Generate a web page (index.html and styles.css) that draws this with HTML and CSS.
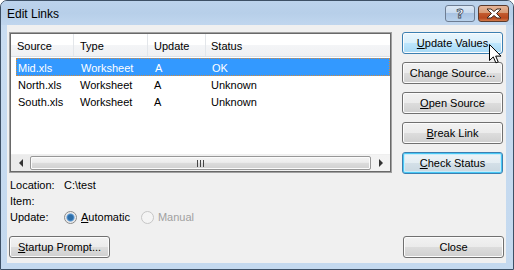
FILE: index.html
```html
<!DOCTYPE html>
<html>
<head>
<meta charset="utf-8">
<link rel="stylesheet" href="styles.css">
</head>
<body>
<div class="window">
  <div class="titlebar">
    <span class="title">Edit Links</span>
    <div class="caption-btns">
      <div class="cap help"><span class="q">?</span></div>
      <div class="cap close">
        <svg width="18" height="11" viewBox="0 0 18 11"><path d="M2 1h4l3 2.5L12 1h4l-4.5 4.5L16 10h-4L9 7.5 6 10H2l4.5-4.5z" fill="#fff" stroke="#3b2a22" stroke-width="1" stroke-linejoin="round"/></svg>
      </div>
    </div>
  </div>
  <div class="client">
    <div class="top">
      <div class="list">
        <div class="header">
          <div class="hcell h1">Source</div>
          <div class="hcell h2">Type</div>
          <div class="hcell h3">Update</div>
          <div class="hcell h4">Status</div>
        </div>
        <div class="rows">
          <div class="row selected"><span class="c1">Mid.xls</span><span class="c2">Worksheet</span><span class="c3">A</span><span class="c4">OK</span></div>
          <div class="row"><span class="c1">North.xls</span><span class="c2">Worksheet</span><span class="c3">A</span><span class="c4">Unknown</span></div>
          <div class="row"><span class="c1">South.xls</span><span class="c2">Worksheet</span><span class="c3">A</span><span class="c4">Unknown</span></div>
        </div>
        <div class="hscroll">
          <div class="arrow"><span class="tri left"></span></div>
          <div class="thumb"><span class="grip"></span></div>
          <div class="arrow"><span class="tri right"></span></div>
        </div>
      </div>
      <div class="btns">
        <div class="btn hover"><span><u>U</u>pdate Values</span></div>
        <div class="btn"><span>Chan<u>g</u>e Source...</span></div>
        <div class="btn"><span><u>O</u>pen Source</span></div>
        <div class="btn"><span><u>B</u>reak Link</span></div>
        <div class="btn default"><span><u>C</u>heck Status</span></div>
      </div>
    </div>
    <div class="info">
      <div class="line"><span class="lbl">Location:</span><span>C:\test</span></div>
      <div class="line"><span class="lbl">Item:</span></div>
      <div class="line"><span class="lbl">Update:</span>
        <span class="radio on"></span><span class="rtext"><u>A</u>utomatic</span>
        <span class="radio off"></span><span class="rtext disabled">Manual</span>
      </div>
    </div>
    <div class="bottom">
      <div class="btn"><span><u>S</u>tartup Prompt...</span></div>
      <div class="btn"><span>Close</span></div>
    </div>
  </div>
  <svg class="cursor" width="13" height="20" viewBox="0 0 13 20"><path d="M0.5 0.5v16l3.8-3.6 2.6 6 2.3-1-2.5-5.8h5.3z" fill="#fff" stroke="#000" stroke-width="1" stroke-linejoin="miter"/></svg>
</div>
</body>
</html>
```
FILE: styles.css
```css
* { box-sizing: border-box; }
html, body { margin: 0; padding: 0; background: #fff; }
body { font-family: "Liberation Sans", Arial, sans-serif; font-size: 11px; color: #000; }

.window {
  position: relative;
  width: 514px;
  height: 270px;
  border: 1px solid #3d5066;
  border-radius: 7px 7px 0 0;
  background: linear-gradient(#c2d7ee, #c8dcf1 30px, #c4d9ef);
  display: flex;
  flex-direction: column;
  overflow: hidden;
}

.titlebar {
  height: 24px;
  display: flex;
  align-items: center;
  justify-content: space-between;
  padding: 0 4px 0 6px;
  background: linear-gradient(#bcd3ec, #b7cfe9 50%, #c0d6ee);
}
.title { font-size: 12px; color: #000; padding-top: 1px; }

.caption-btns { display: flex; gap: 3px; align-self: flex-start; margin-top: 4px; }
.cap {
  height: 17px;
  border: 1px solid #6d7d93;
  border-radius: 3px;
  display: flex;
  align-items: center;
  justify-content: center;
}
.help {
  width: 30px;
  background: linear-gradient(#dce8f5, #c8daee 45%, #a9c3e2 50%, #b9d2ec);
}
.help .q {
  font-family: "DejaVu Sans", sans-serif;
  font-weight: bold;
  font-size: 13px;
  color: #fff;
  -webkit-text-stroke: 0.8px #3c4c60;
  line-height: 13px;
}
.close {
  width: 31px;
  border-color: #5a3a2c;
  background: linear-gradient(#e6b59a, #d79a74 45%, #c25a2e 50%, #b8481e 80%, #d37a4a);
}

.client {
  flex: 1;
  margin: 0 7px 6px 6px;
  background: #f0f0f0;
  padding: 7px 2px 0 2px;
  display: flex;
  flex-direction: column;
}

.top { display: flex; gap: 10px; }

.list {
  width: 383px;
  height: 141px;
  border: 1px solid #a0a0a0;
  box-shadow: inset 0 0 0 1px #696969;
  background: #fff;
  padding: 1px;
  display: flex;
  flex-direction: column;
}
.header {
  height: 23px;
  display: flex;
  background: linear-gradient(#fff 50%, #f4f5f7 50%, #f0f1f3);
  border-bottom: 1px solid #dde1e6;
}
.hcell {
  display: flex;
  align-items: center;
  border-right: 1px solid #e3e6ea;
  padding-left: 6px;
  padding-top: 2px;
}
.h1 { width: 63px; }
.h2 { width: 74px; }
.h3 { width: 58px; }
.h4 { flex: 1; border-right: none; padding-left: 5px; }

.rows { flex: 1; padding-top: 1px; }
.row {
  height: 17px;
  margin-left: 5px;
  display: flex;
  align-items: center;
  color: #000;
  padding-top: 1px;
}
.row.selected {
  background: #3399ff;
  color: #fff;
  border: 1px dotted #d08a40;
  height: 18px;
}
.row .c1 { width: 58px; padding-left: 2px; }
.row .c2 { width: 74px; padding-left: 6px; }
.row .c3 { width: 58px; padding-left: 6px; }
.row .c4 { flex: 1; padding-left: 5px; }
.row.selected .c1 { padding-left: 1px; }

.hscroll {
  height: 17px;
  display: flex;
  align-items: stretch;
  background: linear-gradient(90deg, #ebebeb, #f3f3f3);
  border-top: 1px solid #efefef;
}
.arrow { width: 19px; display: flex; align-items: center; justify-content: center; }
.tri { width: 0; height: 0; border-top: 4px solid transparent; border-bottom: 4px solid transparent; }
.tri.left { border-right: 4px solid #333; }
.tri.right { border-left: 4px solid #333; }
.thumb {
  flex: 1;
  margin: 1px 0;
  border: 1px solid #979797;
  border-radius: 2px;
  background: linear-gradient(#f4f4f4, #ececec 45%, #dcdcdc 50%, #d0d0d0);
  box-shadow: inset 0 0 0 1px #fbfbfb;
  display: flex;
  align-items: center;
  justify-content: center;
}
.grip {
  width: 7px;
  height: 7px;
  background: repeating-linear-gradient(90deg, #444 0 1px, transparent 1px 3px);
}

.btns { width: 101px; display: flex; flex-direction: column; gap: 8px; }

.btn {
  width: 101px;
  height: 22px;
  border: 1px solid #707070;
  border-radius: 3px;
  background: linear-gradient(#f2f2f2, #ebebeb 50%, #dddddd 50%, #cfcfcf);
  box-shadow: inset 0 0 0 1px #fcfcfc;
  display: flex;
  align-items: center;
  justify-content: center;
  color: #000;
}
.btn u { text-decoration-thickness: 1px; text-underline-offset: 1px; }
.btn.hover {
  border-color: #3c7fb1;
  background: linear-gradient(#eaf6fd, #d9f0fc 50%, #bee6fd 50%, #a7d9f5);
}
.btn.default {
  border-color: #3c7fb1;
  box-shadow: inset 0 0 0 1px #48c8f5, inset 0 0 0 2px #c6ecfb;
  background: linear-gradient(#eef4f8, #e4edf2 50%, #d4e0e8 50%, #c9d7e0);
}

.info { margin-top: 3px; padding-left: 1px; }
.line { height: 16px; display: flex; align-items: center; }
.lbl { width: 54px; }
.radio {
  width: 13px;
  height: 13px;
  border-radius: 50%;
  margin-right: 4px;
}
.radio.on {
  border: 1px solid #8a8a8a;
  background: radial-gradient(circle at 50% 50%, #2e6ea8 0 2.5px, #5c9ad6 3.5px, #e6e6e6 4.5px, #f8f8f8 6px);
}
.radio.off {
  border: 1px solid #c6c6c6;
  background: #f4f4f4;
  margin-left: 11px;
}
.rtext.disabled { color: #a0a0a0; }

.bottom { margin-top: 11px; display: flex; justify-content: space-between; }

.cursor { position: absolute; left: 488px; top: 43px; }
```
